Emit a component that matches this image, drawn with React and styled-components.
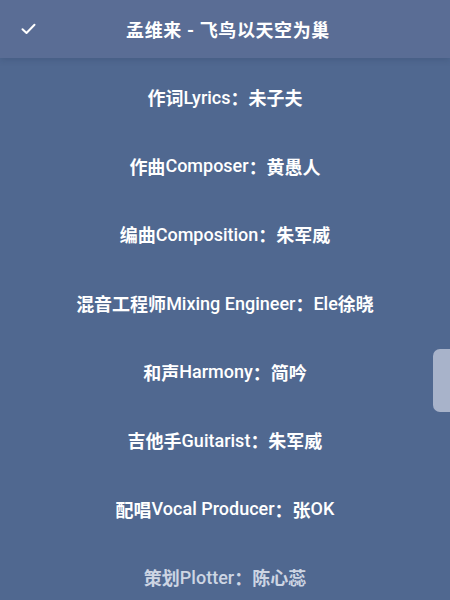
import React from "react";
import styled, { createGlobalStyle } from "styled-components";

const Global = createGlobalStyle`
  html, body { margin: 0; padding: 0; }
  body {
    width: 450px;
    height: 600px;
    overflow: hidden;
    background: #506890;
    font-family: Roboto, "Noto Sans CJK SC", sans-serif;
  }
`;

const Screen = styled.div`
  position: relative;
  width: 450px;
  height: 600px;
  background: #506890;
  display: flex;
  flex-direction: column;
  overflow: hidden;
`;

const Header = styled.div`
  height: 58px;
  flex: none;
  display: flex;
  align-items: center;
  justify-content: center;
  position: relative;
  background: #5a6d95;
  box-shadow: 0 2px 6px rgba(30, 45, 75, 0.18);
  z-index: 1;
`;

const Check = styled.svg`
  position: absolute;
  left: 21px;
  top: 23px;
  width: 15px;
  height: 12px;
`;

const Title = styled.div`
  color: #ffffff;
  font-size: 18px;
  font-weight: 700;
  letter-spacing: 0.6px;
  padding-left: 6px;
`;

const List = styled.div`
  display: flex;
  flex-direction: column;
  padding-top: 5px;
`;

const Row = styled.div`
  height: 68.6px;
  flex: none;
  display: flex;
  align-items: center;
  justify-content: center;
  white-space: pre;
  color: ${(p) => (p.$dim ? "#cdd5e3" : "#ffffff")};
  font-size: 18px;
  font-weight: 700;
`;

const Latin = styled.span`
  font-weight: 500;
`;

const Thumb = styled.div`
  position: absolute;
  left: 433px;
  top: 349px;
  width: 24px;
  height: 63px;
  border-radius: 7px;
  background: #a8b3ca;
`;

const rows = [
  "作词Lyrics：未子夫",
  "作曲Composer：黄愚人",
  "编曲Composition：朱军威",
  "混音工程师Mixing Engineer：Ele徐晓",
  "和声Harmony：简吟",
  "吉他手Guitarist：朱军威",
  "配唱Vocal Producer：张OK",
  "策划Plotter：陈心蕊",
];

function split(text) {
  return text.split(/([A-Za-z ]+)/).filter(Boolean);
}

export default function App() {
  return (
    <Screen>
      <Global />
      <Header>
        <Check viewBox="0 0 15 12">
          <path d="M1.5 6.2 L5.5 10 L13.5 1.8" fill="none" stroke="#ffffff" strokeWidth="2" strokeLinecap="round" strokeLinejoin="round" />
        </Check>
        <Title>孟维来 - 飞鸟以天空为巢</Title>
      </Header>
      <List>
        {rows.map((r, i) => (
          <Row key={i} $dim={i === rows.length - 1}>
            {split(r).map((s, j) =>
              /[A-Za-z]/.test(s) ? <Latin key={j}>{s}</Latin> : <span key={j}>{s}</span>
            )}
          </Row>
        ))}
      </List>
      <Thumb />
    </Screen>
  );
}
